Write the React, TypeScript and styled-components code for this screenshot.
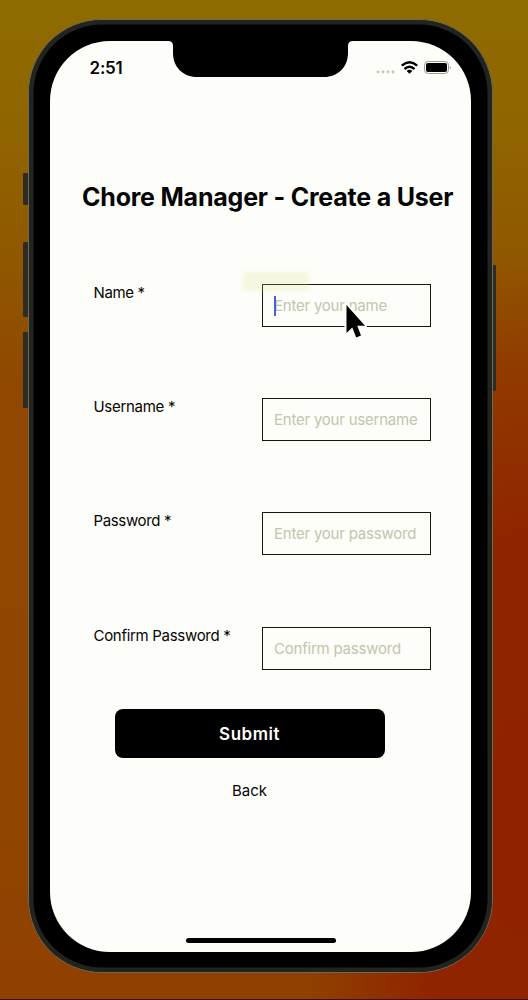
import React from "react";
import styled, { createGlobalStyle } from "styled-components";

const GlobalStyle = createGlobalStyle`
  * { box-sizing: border-box; }
  body { margin: 0; font-family: Inter, "Liberation Sans", sans-serif; color: #050505; }
`;

const Desktop = styled.main`
  display: flex;
  width: 528px;
  height: 1000px;
  overflow: hidden;
  padding-top: 19px;
  border-bottom: 1px solid #3c1018;
  background:
    radial-gradient(ellipse 230px 560px at 100% 82%, #902200 0%, rgba(144, 34, 0, 0.95) 50%, rgba(144, 34, 0, 0) 100%),
    linear-gradient(180deg, #8e6c00 0%, #906400 14%, #905600 27%, #904800 38%, #904600 80%, #904000 100%);
`;

const LeftRail = styled.div`
  display: flex;
  flex-direction: column;
  align-items: flex-end;
  width: 28px;
  padding-top: 154px;
`;

const RightRail = styled.div`
  display: flex;
  flex-direction: column;
  padding-top: 246px;
`;

const SideButton = styled.span<{ $width?: number; $height: number; $gap?: number }>`
  width: ${(p) => p.$width ?? 5}px;
  height: ${(p) => p.$height}px;
  margin-bottom: ${(p) => p.$gap ?? 0}px;
  border-radius: 1px;
  background: #2e2c22;
`;

const Phone = styled.div`
  flex: none;
  width: 465px;
  height: 954px;
  padding: 21px;
  border: 1px solid #6b6a5c;
  border-radius: 74px;
  background: #000;
  box-shadow: inset 0 0 0 4.5px #24241f;
`;

const Screen = styled.div`
  position: relative;
  display: flex;
  flex-direction: column;
  width: 421px;
  height: 911px;
  overflow: hidden;
  border-radius: 60px;
  background: #fdfdf9;
`;

const Notch = styled.svg`
  position: absolute;
  left: 118px;
  top: 0;
`;

const StatusBar = styled.header`
  display: flex;
  justify-content: space-between;
  align-items: center;
  height: 54px;
  padding: 0 20px 0 39.5px;
`;

const Time = styled.span`
  font-size: 17px;
  font-weight: 600;
  line-height: 20px;
  letter-spacing: -0.2px;
`;

const StatusIcons = styled.svg`
  display: block;
`;

const Title = styled.h1`
  margin: 0;
  padding: 86px 0 69.7px 32px;
  font-size: 25px;
  font-weight: 700;
  line-height: 33px;
  letter-spacing: -0.21px;
  white-space: nowrap;
`;

const Form = styled.form`
  display: flex;
  flex-direction: column;
  padding-right: 40px;
  padding-left: 43.5px;
`;

const Fields = styled.div`
  display: flex;
  flex-direction: column;
  gap: 71.3px;
`;

const Field = styled.div`
  display: grid;
  grid-template-columns: 168.5px 169px;
  height: 43px;
  align-items: start;
`;

const Label = styled.label<{ $tracking: number }>`
  font-size: 15px;
  line-height: 18px;
  letter-spacing: ${(p) => p.$tracking}px;
  white-space: nowrap;
`;

const InputBox = styled.div`
  position: relative;
  display: flex;
  align-items: center;
  height: 43px;
  padding-left: 11px;
  border: 1px solid #16160c;
  font-size: 15px;
  letter-spacing: -0.22px;
  white-space: nowrap;
  color: #c4c4ae;
`;

const Caret = styled.i`
  position: absolute;
  left: 11px;
  top: 11px;
  width: 2px;
  height: 20px;
  background: #4264d8;
`;

const Smudge = styled.i`
  position: absolute;
  left: -18px;
  top: -11px;
  width: 62px;
  height: 15px;
  background: rgba(225, 225, 130, 0.2);
  box-shadow: 0 0 4px 2px rgba(225, 225, 130, 0.2);
`;

const Pointer = styled.svg`
  position: absolute;
  left: 80px;
  top: 17px;
`;

const Actions = styled.div`
  display: flex;
  flex-direction: column;
  align-items: center;
  gap: 24px;
  width: 312px;
  padding-top: 39.4px;
`;

const Submit = styled.button`
  width: 270px;
  height: 49px;
  padding: 1px 0 0;
  border: 0;
  border-radius: 8px;
  background: #000;
  color: #fdfdf9;
  font: 600 17px/48px Inter, sans-serif;
  letter-spacing: 0.5px;
`;

const Back = styled.a`
  font-size: 15px;
  line-height: 18px;
`;

const HomeIndicator = styled.i`
  align-self: center;
  width: 150px;
  height: 5px;
  margin: auto 0 9px;
  border-radius: 3px;
  background: #000;
`;

const fields = [
  { label: "Name *", tracking: -0.36, placeholder: "Enter your name", focused: true },
  { label: "Username *", tracking: -0.3, placeholder: "Enter your username" },
  { label: "Password *", tracking: -0.36, placeholder: "Enter your password" },
  { label: "Confirm Password *", tracking: -0.3, placeholder: "Confirm password" },
];

function Status() {
  return (
    <StatusIcons width="76" height="18" viewBox="375 59 76 18">
      <g fill="#c6c6b0">
        {[378, 383, 388, 393].map((x) => (
          <circle key={x} cx={x} cy="72" r="1.4" />
        ))}
      </g>
      <g fill="none" stroke="#000" strokeWidth="2.5">
        <path d="M401.8 65.6Q409.5 59 417.2 65.6" />
        <path d="M404.5 69Q409.5 64.6 414.5 69" />
      </g>
      <path d="M406.6 70.9Q409.5 68.5 412.4 70.9L409.5 73.8Z" />
      <rect x="424.5" y="61.5" width="24" height="12" rx="3.7" fill="none" stroke="#9c9c8c" />
      <rect x="426" y="63" width="21" height="9" rx="2" />
      <path d="M449.8 65.7Q451.4 67.5 449.8 69.3Z" fill="#77776a" />
    </StatusIcons>
  );
}

export default function App() {
  return (
    <>
      <GlobalStyle />
      <Desktop>
        <LeftRail>
          <SideButton $height={32} $gap={37} />
          <SideButton $height={75} $gap={15} />
          <SideButton $height={76} />
        </LeftRail>
        <Phone>
          <Screen>
            <StatusBar>
              <Time>2:51</Time>
              <Status />
            </StatusBar>
            <Notch width="185" height="36" viewBox="0 0 185 36">
              <path d="M0 0Q5 0 5 5V12C5 26 15 36 29 36H156C170 36 180 26 180 12V5Q180 0 185 0Z" />
            </Notch>
            <Title>Chore Manager - Create a User</Title>
            <Form>
              <Fields>
                {fields.map((f) => (
                  <Field key={f.label}>
                    <Label $tracking={f.tracking}>{f.label}</Label>
                    <InputBox>
                      {f.placeholder}
                      {f.focused && (
                        <>
                          <Smudge />
                          <Caret />
                          <Pointer width="30" height="42" viewBox="0 0 30 42">
                            <path
                              d="M3.5 3V31L9.3 25.5L13.2 35.5L18 33.4L14.2 23.8H22Z"
                              fill="#000"
                              stroke="#fdfdf9"
                              strokeWidth="4"
                              strokeLinejoin="round"
                              paintOrder="stroke"
                            />
                          </Pointer>
                        </>
                      )}
                    </InputBox>
                  </Field>
                ))}
              </Fields>
              <Actions>
                <Submit type="button">Submit</Submit>
                <Back>Back</Back>
              </Actions>
            </Form>
            <HomeIndicator />
          </Screen>
        </Phone>
        <RightRail>
          <SideButton $width={3} $height={126} />
        </RightRail>
      </Desktop>
    </>
  );
}
